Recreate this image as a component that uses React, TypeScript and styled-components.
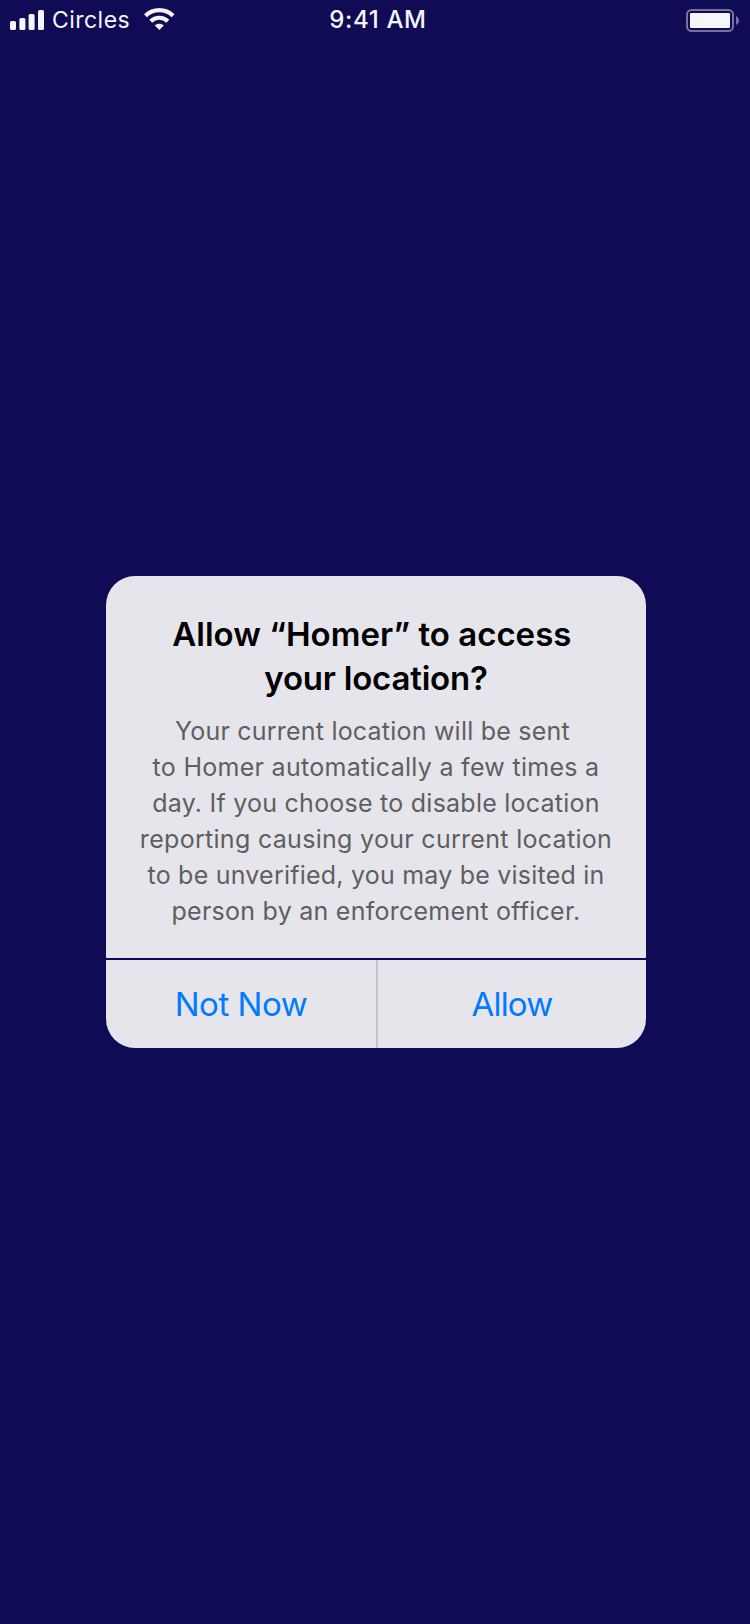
import React from "react";
import styled, { createGlobalStyle } from "styled-components";

const GlobalStyle = createGlobalStyle`
  * { box-sizing: border-box; }
  body { margin: 0; background: #100b55; }
`;

const Screen = styled.div`
  width: 750px;
  height: 1624px;
  display: flex;
  flex-direction: column;
  background: #100b55;
  font-family: Inter, "Liberation Sans", sans-serif;
`;

const StatusBar = styled.header`
  display: grid;
  grid-template-columns: 1fr auto 1fr;
  height: 39px;
  padding: 0 11px 0 10px;
  color: #f5f5fb;
  font-size: 23px;
  line-height: 41px;
`;

const StatusLeft = styled.div`
  display: flex;
  align-items: flex-start;
`;

const StatusRight = styled.div`
  display: flex;
  justify-content: flex-end;
`;

const Carrier = styled.span`
  width: 100px;
  padding-left: 8px;
  letter-spacing: 0.455px;
`;

const Clock = styled.span`
  padding-left: 7px;
  font-size: 24px;
  font-weight: 500;
  line-height: 40px;
  letter-spacing: 0.65px;
`;

const Icon = styled.svg`
  display: block;
  flex: none;
`;

const Main = styled.main`
  flex: 1;
  display: flex;
  flex-direction: column;
  align-items: center;
  padding: 537px 0 0 2px;
`;

const Alert = styled.section`
  width: 540px;
  display: flex;
  flex-direction: column;
  gap: 2px;
`;

const Content = styled.div`
  height: 382px;
  padding-top: 36px;
  border-radius: 29px 29px 1px 1px;
  background: #e6e5eb;
  text-align: center;
`;

const Title = styled.h1`
  margin: 0;
  font-size: 33px;
  font-weight: 600;
  line-height: 44px;
  color: #000;
`;

const Message = styled.p`
  margin: 13px 0 0;
  font-size: 25px;
  line-height: 36px;
  color: #5f5e61;
`;

const Line = styled.span<{ $tracking: number }>`
  display: block;
  white-space: nowrap;
  letter-spacing: ${(p) => p.$tracking}px;
`;

const Actions = styled.div`
  display: flex;
  height: 88px;
  border-radius: 0 0 29px 29px;
  overflow: hidden;
  background: #e6e5eb;
`;

const Action = styled.button<{ $tracking: number }>`
  flex: 1;
  padding: 0;
  border: 0;
  background: none;
  color: #007aff;
  font: 400 33px/88px Inter, "Liberation Sans", sans-serif;
  letter-spacing: ${(p) => p.$tracking}px;

  & + & {
    flex: 0 0 270px;
    border-left: 2px solid #c3c2c8;
  }
`;

const titleLines: [string, number][] = [
  ["Allow “Homer” to access\u00a0", 0.01],
  ["your location?", -0.21],
];

const messageLines: [string, number][] = [
  ["Your current location will be sent\u00a0", 0.214],
  ["to Homer automatically a few times a", 0.29],
  ["day. If you choose to disable location", 0.24],
  ["reporting causing your current location", 0.3],
  ["to be unverified, you may be visited in", 0.219],
  ["person by an enforcement officer.", 0.251],
];

const Signal = () => (
  <Icon width="34" height="39" viewBox="0 0 34 39" fill="#f5f5fb">
    <rect x="0" y="21" width="6" height="9" rx="1.6" />
    <rect x="9.4" y="18" width="6" height="12" rx="1.6" />
    <rect x="18.6" y="14" width="6" height="16" rx="1.6" />
    <rect x="28" y="10" width="6" height="20" rx="1.6" />
  </Icon>
);

const Wifi = () => (
  <Icon width="31" height="39" viewBox="0 0 31 39">
    <g fill="none" stroke="#f5f5fb" strokeWidth="4.2">
      <path d="M1.5 15.8A19.6 19.6 0 0 1 29.1 15.8" />
      <path d="M6.8 21.2A12.2 12.2 0 0 1 23.8 21.2" />
    </g>
    <path d="M15.3 30L10.8 25.5C13.3 23.2 17.3 23.2 19.8 25.5Z" fill="#f5f5fb" />
  </Icon>
);

const Battery = () => (
  <Icon width="53" height="39" viewBox="0 0 53 39">
    <rect x="1" y="10" width="46" height="21" rx="4.5" fill="none" stroke="#75729f" strokeWidth="2" />
    <rect x="4" y="13" width="40" height="15" rx="1.2" fill="#f5f5fb" />
    <path d="M50 16C52 17 53 18.6 53 20.5S52 24 50 25Z" fill="#75729f" />
  </Icon>
);

export default function App() {
  return (
    <Screen>
      <GlobalStyle />
      <StatusBar>
        <StatusLeft>
          <Signal />
          <Carrier>Circles</Carrier>
          <Wifi />
        </StatusLeft>
        <Clock>9:41 AM</Clock>
        <StatusRight>
          <Battery />
        </StatusRight>
      </StatusBar>
      <Main>
        <Alert role="alertdialog">
          <Content>
            <Title>
              {titleLines.map(([text, tracking]) => (
                <Line key={text} $tracking={tracking}>{text}</Line>
              ))}
            </Title>
            <Message>
              {messageLines.map(([text, tracking]) => (
                <Line key={text} $tracking={tracking}>{text}</Line>
              ))}
            </Message>
          </Content>
          <Actions>
            <Action $tracking={-0.45}>Not Now</Action>
            <Action $tracking={-0.8}>Allow</Action>
          </Actions>
        </Alert>
      </Main>
    </Screen>
  );
}
